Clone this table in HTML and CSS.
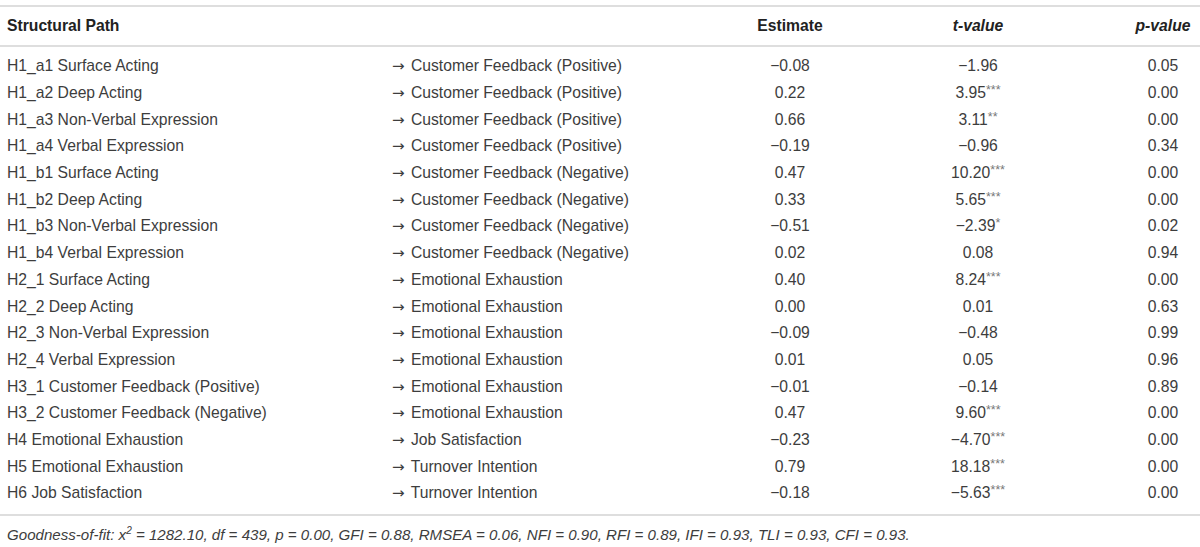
FILE: index.html
```html
<!DOCTYPE html>
<html>
<head>
<meta charset="utf-8">
<link rel="stylesheet" href="styles.css">
</head>
<body>
<div class="table">
  <div class="head">
    <div class="c1">Structural Path</div>
    <div class="c2"></div>
    <div class="c3">Estimate</div>
    <div class="c4"><i>t-value</i></div>
    <div class="c5"><i>p-value</i></div>
  </div>
  <div class="body">
    <div class="row"><div class="c1">H1_a1 Surface Acting</div><div class="c2"><span class="ar">→</span> Customer Feedback (Positive)</div><div class="c3">−0.08</div><div class="c4">−1.96</div><div class="c5">0.05</div></div>
    <div class="row"><div class="c1">H1_a2 Deep Acting</div><div class="c2"><span class="ar">→</span> Customer Feedback (Positive)</div><div class="c3">0.22</div><div class="c4">3.95<sup>***</sup></div><div class="c5">0.00</div></div>
    <div class="row"><div class="c1">H1_a3 Non-Verbal Expression</div><div class="c2"><span class="ar">→</span> Customer Feedback (Positive)</div><div class="c3">0.66</div><div class="c4">3.11<sup>**</sup></div><div class="c5">0.00</div></div>
    <div class="row"><div class="c1">H1_a4 Verbal Expression</div><div class="c2"><span class="ar">→</span> Customer Feedback (Positive)</div><div class="c3">−0.19</div><div class="c4">−0.96</div><div class="c5">0.34</div></div>
    <div class="row"><div class="c1">H1_b1 Surface Acting</div><div class="c2"><span class="ar">→</span> Customer Feedback (Negative)</div><div class="c3">0.47</div><div class="c4">10.20<sup>***</sup></div><div class="c5">0.00</div></div>
    <div class="row"><div class="c1">H1_b2 Deep Acting</div><div class="c2"><span class="ar">→</span> Customer Feedback (Negative)</div><div class="c3">0.33</div><div class="c4">5.65<sup>***</sup></div><div class="c5">0.00</div></div>
    <div class="row"><div class="c1">H1_b3 Non-Verbal Expression</div><div class="c2"><span class="ar">→</span> Customer Feedback (Negative)</div><div class="c3">−0.51</div><div class="c4">−2.39<sup>*</sup></div><div class="c5">0.02</div></div>
    <div class="row"><div class="c1">H1_b4 Verbal Expression</div><div class="c2"><span class="ar">→</span> Customer Feedback (Negative)</div><div class="c3">0.02</div><div class="c4">0.08</div><div class="c5">0.94</div></div>
    <div class="row"><div class="c1">H2_1 Surface Acting</div><div class="c2"><span class="ar">→</span> Emotional Exhaustion</div><div class="c3">0.40</div><div class="c4">8.24<sup>***</sup></div><div class="c5">0.00</div></div>
    <div class="row"><div class="c1">H2_2 Deep Acting</div><div class="c2"><span class="ar">→</span> Emotional Exhaustion</div><div class="c3">0.00</div><div class="c4">0.01</div><div class="c5">0.63</div></div>
    <div class="row"><div class="c1">H2_3 Non-Verbal Expression</div><div class="c2"><span class="ar">→</span> Emotional Exhaustion</div><div class="c3">−0.09</div><div class="c4">−0.48</div><div class="c5">0.99</div></div>
    <div class="row"><div class="c1">H2_4 Verbal Expression</div><div class="c2"><span class="ar">→</span> Emotional Exhaustion</div><div class="c3">0.01</div><div class="c4">0.05</div><div class="c5">0.96</div></div>
    <div class="row"><div class="c1">H3_1 Customer Feedback (Positive)</div><div class="c2"><span class="ar">→</span> Emotional Exhaustion</div><div class="c3">−0.01</div><div class="c4">−0.14</div><div class="c5">0.89</div></div>
    <div class="row"><div class="c1">H3_2 Customer Feedback (Negative)</div><div class="c2"><span class="ar">→</span> Emotional Exhaustion</div><div class="c3">0.47</div><div class="c4">9.60<sup>***</sup></div><div class="c5">0.00</div></div>
    <div class="row"><div class="c1">H4 Emotional Exhaustion</div><div class="c2"><span class="ar">→</span> Job Satisfaction</div><div class="c3">−0.23</div><div class="c4">−4.70<sup>***</sup></div><div class="c5">0.00</div></div>
    <div class="row"><div class="c1">H5 Emotional Exhaustion</div><div class="c2"><span class="ar">→</span> Turnover Intention</div><div class="c3">0.79</div><div class="c4">18.18<sup>***</sup></div><div class="c5">0.00</div></div>
    <div class="row"><div class="c1">H6 Job Satisfaction</div><div class="c2"><span class="ar">→</span> Turnover Intention</div><div class="c3">−0.18</div><div class="c4">−5.63<sup>***</sup></div><div class="c5">0.00</div></div>
  </div>
  <div class="foot">Goodness-of-fit: x<sup class="sq">2</sup> = 1282.10, df = 439, p = 0.00, GFI = 0.88, RMSEA = 0.06, NFI = 0.90, RFI = 0.89, IFI = 0.93, TLI = 0.93, CFI = 0.93.</div>
</div>
</body>
</html>
```

FILE: styles.css
```css
html, body {
  margin: 0;
  padding: 0;
  background: #ffffff;
}
body {
  font-family: "Liberation Sans", Arial, sans-serif;
  font-size: 15.7px;
  color: #3d3d3d;
}
.table {
  margin-top: 5px;
  border-top: 2px solid #dedede;
}
.head, .row {
  display: grid;
  grid-template-columns: 385px 335px 140px 236px 104px;
  align-items: center;
}
.head {
  height: 38px;
  font-weight: bold;
  color: #222;
  border-bottom: 2px solid #dedede;
}
.body {
  padding: 6px 0 7px;
  border-bottom: 2px solid #dedede;
}
.row {
  height: 26.7px;
  white-space: nowrap;
}
.c1 { padding-left: 7px; }
.c2 { padding-left: 7px; }
.c3 { text-align: center; }
.c4 { text-align: center; }
.c5 { text-align: center; padding-left: 30px; }
.ar {
  font-family: "DejaVu Sans", sans-serif;
  font-size: 15px;
  margin-right: 2px;
}
.row sup {
  font-size: 12.5px;
  color: #777;
  vertical-align: 4px;
  line-height: 0;
}
.foot {
  font-style: italic;
  font-size: 15.1px;
  padding: 10px 7px 0;
  line-height: 18px;
}
.foot .sq {
  font-size: 10px;
  vertical-align: 6px;
  line-height: 0;
}
```
